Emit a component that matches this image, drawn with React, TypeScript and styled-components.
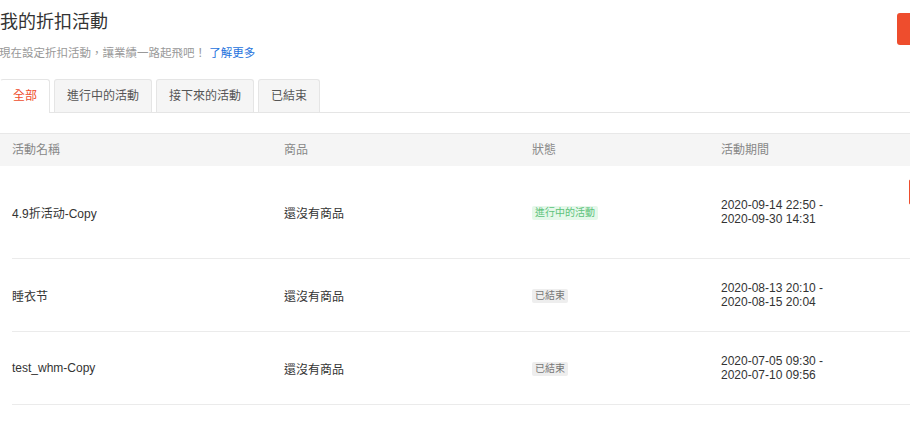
import styled, { createGlobalStyle } from "styled-components";

const GlobalStyle = createGlobalStyle`
  body {
    margin: 0;
    background: #fff;
    overflow: hidden;
    font-family: "Liberation Sans", Arial, "Noto Sans CJK TC", sans-serif;
    color: #333;
  }
`;

type Status = "ongoing" | "ended";

const CAMPAIGNS: {
  id: number;
  name: string;
  product: string;
  status: Status;
  start: string;
  end: string;
}[] = [
  { id: 1, name: "4.9折活动-Copy", product: "還沒有商品", status: "ongoing", start: "2020-09-14 22:50", end: "2020-09-30 14:31" },
  { id: 2, name: "睡衣节", product: "還沒有商品", status: "ended", start: "2020-08-13 20:10", end: "2020-08-15 20:04" },
  { id: 3, name: "test_whm-Copy", product: "還沒有商品", status: "ended", start: "2020-07-05 09:30", end: "2020-07-10 09:56" },
];

const TABS = ["全部", "進行中的活動", "接下來的活動", "已結束"];

const App = () => {
  return (
    <>
      <GlobalStyle />
      <Page>
        <TopBar>
          <div>
            <Title>我的折扣活動</Title>
            <Subtitle>
              現在設定折扣活動，讓業績一路起飛吧！ <MoreLink href="#">了解更多</MoreLink>
            </Subtitle>
          </div>
          <CreateButton>+ 建立</CreateButton>
        </TopBar>

        <TabList>
          {TABS.map((tab, i) => (
            <Tab key={tab} $active={i === 0}>
              {tab}
            </Tab>
          ))}
        </TabList>

        <Table>
          <HeadRow>
            <HeadCell>活動名稱</HeadCell>
            <HeadCell>商品</HeadCell>
            <HeadCell>狀態</HeadCell>
            <HeadCell>活動期間</HeadCell>
            <HeadCell $right>操作</HeadCell>
          </HeadRow>
          {CAMPAIGNS.map((c) => (
            <Row key={c.id}>
              <Cell>{c.name}</Cell>
              <Cell>{c.product}</Cell>
              <Cell>
                <Badge $status={c.status}>{c.status === "ongoing" ? "進行中的活動" : "已結束"}</Badge>
              </Cell>
              <Cell>
                <DateLine>{c.start} -</DateLine>
                <DateLine>{c.end}</DateLine>
              </Cell>
              <Cell>
                <Actions>
                  {c.status === "ongoing" && <EditButton>編輯</EditButton>}
                  {c.status === "ongoing" && <ActionLink href="#">結束</ActionLink>}
                  <ActionLink href="#">複製</ActionLink>
                </Actions>
              </Cell>
            </Row>
          ))}
        </Table>
      </Page>
    </>
  );
};

export default App;

const Page = styled.div`
  width: 1010px;
  padding-top: 10px;
`;

const TopBar = styled.div`
  display: flex;
  justify-content: space-between;
  align-items: flex-start;
`;

const Title = styled.h1`
  margin: 0;
  font-size: 18px;
  line-height: 24px;
  font-weight: 400;
  color: #333;
`;

const Subtitle = styled.p`
  margin: 11px 0 0 -1px;
  font-size: 11.5px;
  line-height: 16px;
  color: #999;
`;

const MoreLink = styled.a`
  color: #2673dd;
  text-decoration: none;
`;

const CreateButton = styled.button`
  margin-top: 3px;
  width: 113px;
  height: 32px;
  border: none;
  border-radius: 3px;
  background: #ee4d2d;
  color: #fff;
  font-size: 12px;
  text-align: right;
  padding: 0 10px;
`;

const TabList = styled.div`
  display: flex;
  gap: 4px;
  margin-top: 18px;
  border-bottom: 1px solid #e5e5e5;
`;

const Tab = styled.div<{ $active?: boolean }>`
  height: 32px;
  line-height: 32px;
  padding: 0 12px;
  font-size: 12px;
  border: 1px solid #e5e5e5;
  border-bottom: none;
  border-radius: 3px 3px 0 0;
  margin-bottom: -1px;
  background: ${(p) => (p.$active ? "#fff" : "#f5f5f5")};
  color: ${(p) => (p.$active ? "#ee4d2d" : "#555")};
  padding-bottom: ${(p) => (p.$active ? "1px" : "0")};
  &:first-child {
    border-left-color: transparent;
  }
`;

const Table = styled.div`
  margin-top: 20px;
  font-size: 12px;
`;

const HeadRow = styled.div`
  display: grid;
  grid-template-columns: 272px 248px 189px 188px 1fr;
  background: #f5f5f5;
  border-top: 1px solid #e8e8e8;
  height: 32px;
`;

const HeadCell = styled.div<{ $right?: boolean }>`
  padding: 0 12px;
  line-height: 32px;
  color: #888;
  text-align: ${(p) => (p.$right ? "right" : "left")};
`;

const Row = styled.div`
  display: grid;
  grid-template-columns: 260px 248px 189px 188px 1fr;
  align-items: center;
  margin-left: 12px;
  box-sizing: border-box;
  min-height: 73px;
  padding: 13px 0;
  border-bottom: 1px solid #ebebeb;
`;

const Cell = styled.div`
  padding: 0 12px;
  color: #333;
  &:first-child {
    padding-left: 0;
  }
`;

const Badge = styled.span<{ $status: Status }>`
  display: inline-block;
  font-size: 10px;
  line-height: 14px;
  padding: 0 3px;
  border-radius: 2px;
  background: ${(p) => (p.$status === "ongoing" ? "#e5f8ea" : "#eeeeee")};
  color: ${(p) => (p.$status === "ongoing" ? "#5cc27a" : "#777")};
`;

const DateLine = styled.div`
  line-height: 14px;
  color: #333;
`;

const Actions = styled.div`
  display: flex;
  flex-direction: column;
  align-items: flex-end;
`;

const EditButton = styled.button`
  align-self: stretch;
  height: 26px;
  padding: 0 12px;
  border: 1px solid #ee4d2d;
  border-radius: 2px;
  background: #fff;
  color: #ee4d2d;
  font-size: 12px;
`;

const ActionLink = styled.a`
  line-height: 20px;
  color: #2673dd;
  text-decoration: none;
`;
